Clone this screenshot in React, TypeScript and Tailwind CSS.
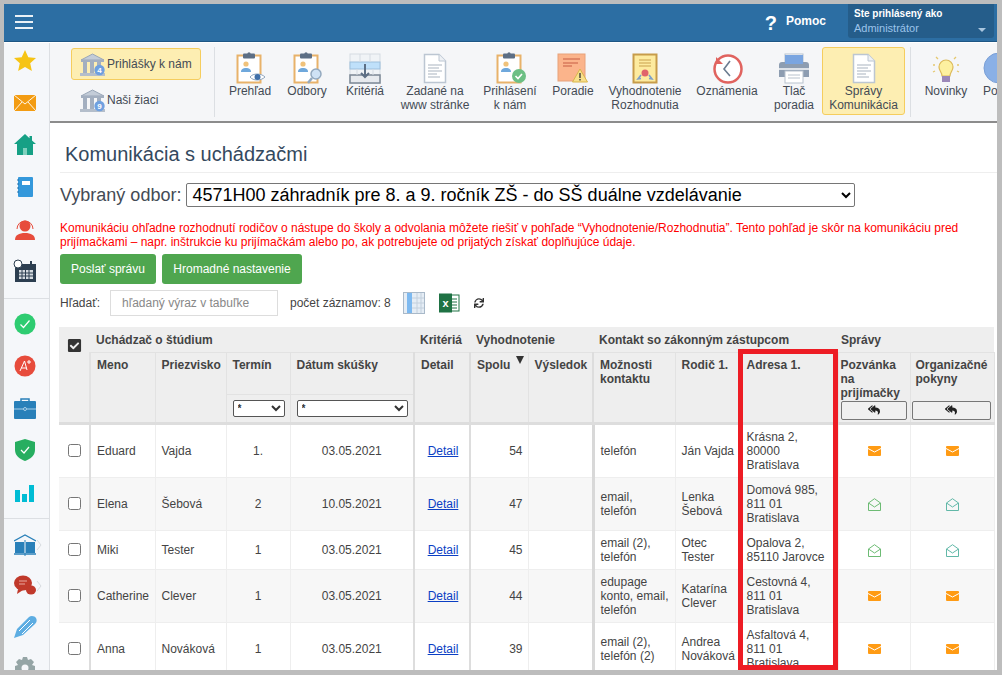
import React from "react";
import { FaReplyAll, FaSync, FaCheckSquare } from "react-icons/fa";

const Clipboard = ({ children }: { children?: React.ReactNode }) => (
  <svg width="34" height="32" viewBox="0 0 34 32">
    <rect x="4.5" y="3.5" width="23" height="27" fill="#fff" stroke="#e8b26a" strokeWidth="2" />
    <rect x="10" y="1.5" width="12" height="5" rx="1" fill="#5d6f85" />
    <circle cx="16" cy="1.8" r="1.6" fill="#5d6f85" />
    <circle cx="13" cy="12" r="2.6" fill="#f0c27a" />
    <path d="M8 20c0-3 2-4 5-4s5 1 5 4z" fill="#6fa8dc" />
    {children}
  </svg>
);

const Bank = ({ n }: { n: string }) => (
  <svg width="26" height="25" viewBox="0 0 26 25">
    <path d="M1 8 L12.5 2 L24 8 Z" fill="#c3ccd8" stroke="#9aa7b8" />
    <rect x="1" y="8" width="23" height="2" fill="#a3afc0" />
    <rect x="3" y="10" width="4" height="11" fill="#a3afc0" />
    <rect x="10" y="10" width="4" height="11" fill="#a3afc0" />
    <rect x="17" y="10" width="4" height="11" fill="#a3afc0" />
    <rect x="0" y="21" width="25" height="3" fill="#b4becb" />
    <circle cx="19.5" cy="18" r="5.2" fill="#6fa0e0" />
    <text x="19.5" y="21" fontSize="8" fontWeight="700" fill="#fff" textAnchor="middle">{n}</text>
  </svg>
);

const Doc = () => (
  <svg width="26" height="31" viewBox="0 0 26 31">
    <path d="M2.5 1.5H17L23.5 8V29.5H2.5Z" fill="#fff" stroke="#bcc6d2" strokeWidth="1.5" />
    <path d="M17 1.5V8H23.5" fill="#eef1f5" stroke="#bcc6d2" />
    <path d="M6 12H20M6 15H17M6 18H20M6 21H15M6 24H18" stroke="#a9b3bf" strokeWidth="1.2" />
  </svg>
);

const toolIcons: Record<string, React.ReactNode> = {
  eye: (
    <Clipboard>
      <path d="M17 25c3-4 11-4 15 0-4 4-12 4-15 0z" fill="#fff" stroke="#8fa5bd" />
      <circle cx="24.5" cy="25" r="3" fill="#3f6fa8" />
    </Clipboard>
  ),
  zoom: (
    <Clipboard>
      <circle cx="26" cy="22" r="5" fill="#cfe2f5" stroke="#93a9bf" strokeWidth="1.5" />
      <path d="M22 26l-4 5" stroke="#93a9bf" strokeWidth="2.5" />
    </Clipboard>
  ),
  grid: (
    <svg width="32" height="31" viewBox="0 0 32 31">
      <rect x="1" y="1" width="30" height="29" fill="#f0f3f6" stroke="#d5dbe2" />
      <rect x="1" y="9" width="30" height="7" fill="#bfe0fa" stroke="#9dbfdc" />
      <rect x="1" y="22" width="30" height="8" fill="#e7eaee" stroke="#7b8794" strokeWidth="1.5" />
      <path d="M11 1V9M21 1V9M8 16V22M24 16V22" stroke="#d5dbe2" />
      <path d="M16 11V23M12 20l4 4 4-4" stroke="#5d6f85" strokeWidth="2" fill="none" />
    </svg>
  ),
  doc: <Doc />,
  check: (
    <Clipboard>
      <circle cx="26" cy="24" r="7" fill="#6cbf84" />
      <path d="M22.5 24l2.5 2.5 4-4.5" stroke="#fff" strokeWidth="1.6" fill="none" />
    </Clipboard>
  ),
  rank: (
    <svg width="32" height="30" viewBox="0 0 32 30">
      <rect x="1" y="1" width="27" height="27" fill="#fbb48b" stroke="#e8a27a" />
      <path d="M6 6H23M6 10H21M6 13H15" stroke="#d9795c" strokeWidth="1.3" />
      <path d="M23 16l7.5 13h-15z" fill="#f8e08c" stroke="#d9b54a" />
      <path d="M23 20v5M23 26v1.5" stroke="#333" strokeWidth="1.3" />
    </svg>
  ),
  cert: (
    <svg width="26" height="31" viewBox="0 0 26 31">
      <rect x="1.5" y="1.5" width="23" height="28" fill="#fdeb9f" stroke="#c79c4a" strokeWidth="2" />
      <path d="M7 7H19M7 10H19M7 13H19" stroke="#c9a24f" strokeWidth="1.2" />
      <circle cx="13" cy="20" r="3.5" fill="#e0646b" />
      <path d="M9 22l-3 4 3-.5M17 22l3 4-3-.5" stroke="#7ea0c8" strokeWidth="1.6" fill="none" />
    </svg>
  ),
  clock: (
    <svg width="32" height="32" viewBox="0 0 32 32">
      <circle cx="17" cy="17" r="13.5" fill="#fff" stroke="#e0635f" strokeWidth="2.5" />
      <path d="M5 5v7h7z" fill="#e0635f" />
      <path d="M19 9l-6 8 6 7" stroke="#6b7c90" strokeWidth="1.6" fill="none" />
    </svg>
  ),
  print: (
    <svg width="32" height="31" viewBox="0 0 32 31">
      <rect x="7" y="1" width="18" height="12" fill="#fff" stroke="#b8c2cd" />
      <path d="M1 12a3 3 0 0 1 3-3h24a3 3 0 0 1 3 3v12H1Z" fill="#8d9db1" />
      <path d="M7 2H25V11H7Z" fill="#7aa5e0" />
      <rect x="7" y="18" width="18" height="12" fill="#fff" stroke="#b8c2cd" />
      <path d="M10 22H22M10 25H22" stroke="#b8c2cd" />
      <rect x="1" y="15" width="30" height="2" fill="#fff" opacity=".7" />
    </svg>
  ),
  bulb: (
    <svg width="32" height="32" viewBox="0 0 32 32">
      <path d="M9 15a7 7 0 1 1 14 0c0 4-3 5-3 9h-8c0-4-3-5-3-9z" fill="#fdf0a0" stroke="#dcb95a" strokeWidth="1.2" />
      <rect x="12" y="24" width="8" height="6" fill="#9b87b8" />
      <path d="M3 13H5M27 13H29M6 5L8 7M26 5L24 7M3 20l2-1M29 20l-2-1" stroke="#e5c86e" strokeWidth="1.3" />
    </svg>
  ),
  circle: (
    <svg width="32" height="32" viewBox="0 0 32 32" className="shrink-0">
      <circle cx="16" cy="16" r="15" fill="#8ab0e6" stroke="#7a9fd6" />
    </svg>
  ),
};

const tools = [
  { w: "w-[56px]", icon: "eye", label: ["Prehľad"] },
  { w: "w-[58px]", icon: "zoom", label: ["Odbory"] },
  { w: "w-[58px]", icon: "grid", label: ["Kritériá"] },
  { w: "w-[82px]", icon: "doc", label: ["Zadané na", "www stránke"] },
  { w: "w-[68px]", icon: "check", label: ["Prihlásení", "k nám"] },
  { w: "w-[58px]", icon: "rank", label: ["Poradie"] },
  { w: "w-[86px]", icon: "cert", label: ["Vyhodnotenie", "Rozhodnutia"] },
  { w: "w-[78px]", icon: "clock", label: ["Oznámenia"] },
  { w: "w-[56px]", icon: "print", label: ["Tlač", "poradia"] },
];

const Tool = ({ w, icon, label, active }: { w: string; icon: string; label: string[]; active?: boolean }) => (
  <div className={`${w} h-[68px] shrink-0 self-start mt-[4px] flex flex-col items-center rounded-[3px] ${active ? "bg-[#fdeeb2] border border-[#f5cd5e] pt-[4px]" : "pt-[5px]"}`}>
    <div className="h-[32px] flex items-center justify-center">{toolIcons[icon]}</div>
    <div className="text-center whitespace-nowrap leading-[14px] text-[#444b55]">
      {label.map((l) => (
        <div key={l}>{l}</div>
      ))}
    </div>
  </div>
);

const side1: React.ReactNode[] = [
  <svg width="24" height="24" viewBox="0 0 24 24"><path d="M12 1l3.3 7.3 7.7.8-5.8 5.2 1.7 7.7L12 18l-6.9 4 1.7-7.7L1 9.1l7.7-.8z" fill="#f6c416" /></svg>,
  <svg width="24" height="18" viewBox="0 0 24 18"><rect x="1" y="1" width="22" height="16" fill="#f39c12" /><path d="M1 1l11 9 11-9M1 17l8-9M23 17l-8-9" stroke="#fff" fill="none" strokeWidth=".9" /></svg>,
  <svg width="24" height="24" viewBox="0 0 24 24"><path d="M12 1L1 11h3v11h16V11h3l-4-3.6V3h-2.5v2.2z" fill="#16a085" /><rect x="10" y="15" width="4" height="7" fill="#7fd0bd" /></svg>,
  <svg width="18" height="22" viewBox="0 0 18 22"><rect x="2" y="1" width="15" height="20" rx="1" fill="#3498db" /><rect x="6" y="5" width="8" height="4" fill="#fff" /><path d="M1 4h2M1 8h2M1 12h2M1 16h2" stroke="#1f6fa8" /></svg>,
  <svg width="22" height="24" viewBox="0 0 22 24"><path d="M3 12a8 8 0 1 1 16 0" fill="none" stroke="#e74c3c" /><circle cx="11" cy="9" r="5.5" fill="#e74c3c" /><path d="M1 23c0-5 4-7 10-7s10 2 10 7z" fill="#e74c3c" /></svg>,
  <svg width="24" height="24" viewBox="0 0 24 24"><rect x="2" y="5" width="21" height="18" fill="#2c3e50" /><rect x="6" y="11" width="14" height="9" fill="#d5dbe0" /><path d="M6 14h14M6 17h14M9 11v9M12.5 11v9M16 11v9" stroke="#2c3e50" /><circle cx="5" cy="5" r="4" fill="#fff" stroke="#2c3e50" /><rect x="17" y="2" width="2" height="5" fill="#2c3e50" /></svg>,
];
const side2: React.ReactNode[] = [
  <svg width="22" height="22" viewBox="0 0 22 22"><circle cx="11" cy="11" r="10.5" fill="#2ecc71" /><path d="M6.5 11.5l3 3 6-7" stroke="#fff" strokeWidth="1.2" fill="none" /></svg>,
  <svg width="22" height="22" viewBox="0 0 22 22"><circle cx="11" cy="11" r="10.5" fill="#e74c3c" /><path d="M6 16L10.5 6l2.5 9M7.5 13h5M15 5v4M13 7h4" stroke="#fff" strokeWidth="1" fill="none" /></svg>,
  <svg width="24" height="24" viewBox="0 0 24 24"><path d="M8 6V3h8v3" fill="none" stroke="#2980b9" strokeWidth="1.5" /><rect x="1" y="5" width="22" height="18" rx="1" fill="#2980b9" /><path d="M1 13h22" stroke="#a9cfe8" /><circle cx="12" cy="13" r="1.5" fill="#2980b9" stroke="#a9cfe8" /></svg>,
  <svg width="22" height="24" viewBox="0 0 22 24"><path d="M11 1l10 3v8c0 6-5 9-10 11C6 21 1 18 1 12V4z" fill="#27ae60" /><path d="M7 12l3 3 5-6" stroke="#fff" fill="none" strokeWidth="1.2" /></svg>,
  <svg width="20" height="20" viewBox="0 0 20 20"><rect x="0" y="8" width="5" height="12" fill="#00bcd4" /><rect x="7" y="12" width="5" height="8" fill="#00bcd4" /><rect x="14" y="3" width="5" height="17" fill="#00bcd4" /></svg>,
];
const Chev = () => (
  <svg width="6" height="12" viewBox="0 0 6 12" className="-mr-[6px]"><path d="M1 1l4 5-4 5" fill="none" stroke="#d8dce0" /></svg>
);
const side3: React.ReactNode[] = [
  <div className="flex items-center"><svg width="22" height="22" viewBox="0 0 22 22"><path d="M0 7L11 1l11 6" fill="none" stroke="#2980b9" strokeWidth="1.2" /><path d="M1 8h9v11H1zM12 8h9v11h-9z" fill="#2980b9" /><path d="M11 6v16" stroke="#2980b9" /><path d="M0 20h22" stroke="#2980b9" strokeWidth="1.5" /></svg><Chev /></div>,
  <div className="flex items-center"><svg width="22" height="22" viewBox="0 0 22 22"><ellipse cx="9" cy="8" rx="9" ry="7.5" fill="#c0392b" /><path d="M4 14l-1 5 6-4z" fill="#c0392b" /><ellipse cx="17" cy="15" rx="5" ry="4.5" fill="#c0392b" /><path d="M5 6h8M5 9h6" stroke="#e8a8a0" /></svg><Chev /></div>,
  <svg width="24" height="24" viewBox="0 0 24 24"><path d="M1 23l3-9L16 2c2-2 6-1 7 1s1 4-1 6L10 20z" fill="#5dade2" /><path d="M6 16L17 5M9 19L20 8" stroke="#fff" strokeWidth="1" /></svg>,
  <svg width="24" height="24" viewBox="0 0 24 24"><path d="M10 1h4l1 3 3-1 3 3-2 3 3 1v4l-3 1 2 3-3 3-3-2-1 3h-4l-1-3-3 2-3-3 2-3-3-1v-4l3-1-2-3 3-3 3 1z" fill="#95a5a6" /><circle cx="12" cy="12" r="3.5" fill="#f5f7fa" /></svg>,
];

const MailSolid = () => (
  <svg width="13" height="10" viewBox="0 0 13 10" className="inline-block">
    <rect x="0" y="0" width="13" height="10" rx="1" fill="#ff9b14" />
    <path d="M0 2.5l6.5 3.5 6.5-3.5" stroke="#fff" strokeWidth="1" fill="none" />
  </svg>
);
const MailOpen = ({ c }: { c: string }) => (
  <svg width="13" height="13" viewBox="0 0 13 13" className="inline-block">
    <path d="M.5 5L6.5.7 12.5 5v7.5H.5z" fill="none" stroke={c} />
    <path d="M.5 5l6 4 6-4" fill="none" stroke={c} />
  </svg>
);

const rows = [
  { m: "Eduard", p: "Vajda", t: "1.", d: "03.05.2021", s: "54", k: ["telefón"], r: ["Ján Vajda"], a: ["Krásna 2,", "80000", "Bratislava"], open: false, h: "h-[53px]" },
  { m: "Elena", p: "Šebová", t: "2", d: "10.05.2021", s: "47", k: ["email,", "telefón"], r: ["Lenka", "Šebová"], a: ["Domová 985,", "811 01", "Bratislava"], open: true, h: "h-[53px]" },
  { m: "Miki", p: "Tester", t: "1", d: "03.05.2021", s: "45", k: ["email (2),", "telefón"], r: ["Otec", "Tester"], a: ["Opalova 2,", "85110 Jarovce"], open: true, h: "h-[39px]" },
  { m: "Catherine", p: "Clever", t: "1", d: "03.05.2021", s: "44", k: ["edupage", "konto, email,", "telefón"], r: ["Katarína", "Clever"], a: ["Cestovná 4,", "811 01", "Bratislava"], open: false, h: "h-[53px]" },
  { m: "Anna", p: "Nováková", t: "1", d: "03.05.2021", s: "39", k: ["email (2),", "telefón (2)"], r: ["Andrea", "Nováková"], a: ["Asfaltová 4,", "811 01", "Bratislava"], open: false, h: "h-[53px]" },
];

const th = "align-top text-left font-bold text-[#444] px-[6px] pt-[5px] border border-[#e2e2e2] leading-[14px]";
const gr = "text-left font-bold text-[#444] pt-[1px]";
const td = "px-[6px] py-[5px] align-middle border border-[#eeeeee] leading-[14px] text-[#444]";
const thick = "border-b-[3px] border-b-[#dddddd]";

const Lines = ({ l }: { l: string[] }) => (
  <>
    {l.map((x, i) => (
      <div key={i} className="whitespace-nowrap">{x}</div>
    ))}
  </>
);

const ReplyBtn = () => (
  <button className="w-full h-[19px] border border-[#777] rounded-[2px] bg-[#f0f0f0] flex items-center justify-center">
    <FaReplyAll size={12} color="#222" />
  </button>
);

export default function App() {
  return (
    <div className="h-[675px] w-[1002px] bg-[#bdbdbd] pt-[4px] pl-[4px] pr-[5px] pb-[5px] overflow-hidden [font-family:'Liberation_Sans',Arial,sans-serif] text-[12px]">
      <div className="relative h-full flex flex-col overflow-hidden bg-white">
        <header className="h-[38px] shrink-0 bg-[#2c6ea3] border-b border-[#1d5684] flex items-center text-white">
          <div className="w-[18px] ml-[11px] -mt-[1px] flex flex-col gap-[4px]">
            <span className="h-[2px] bg-white/90" />
            <span className="h-[2px] bg-white/90" />
            <span className="h-[2px] bg-white/90" />
          </div>
          <div className="ml-auto flex items-center h-full">
            <span className="text-[20px] font-bold leading-none mr-[9px]">?</span>
            <span className="font-bold mr-[22px] -mt-[3px]">Pomoc</span>
            <div className="w-[146px] h-[34px] self-start bg-[#255d8a] rounded-b-[3px] pl-[6px] pr-[8px] pt-[3px] mr-[3px]">
              <div className="font-bold text-[10px] leading-[14px]">Ste prihlásený ako</div>
              <div className="flex items-center justify-between text-[#9cc4ea] text-[11px] leading-[14px]">
                <span>Administrátor</span>
                <span className="w-0 h-0 border-l-[4px] border-r-[4px] border-t-[4px] border-l-transparent border-r-transparent border-t-[#a9c6df] mt-[3px]" />
              </div>
            </div>
          </div>
        </header>
        <div className="flex-1 flex min-h-0 mt-[1px]">
          <aside className="w-[46px] shrink-0 bg-[#f5f7fa] border-r border-[#dcdfe3] overflow-hidden">
            <div className="flex flex-col items-center gap-[14px] pt-[4px] pb-[13px] pr-[4px] border-b border-[#dcdfe3]">
              {side1.map((s, i) => <div key={i} className="h-[28px] flex items-center justify-center">{s}</div>)}
            </div>
            <div className="flex flex-col items-center gap-[14px] pt-[11px] pb-[12px] pr-[4px] border-b border-[#dcdfe3]">
              {side2.map((s, i) => <div key={i} className="h-[28px] flex items-center justify-center">{s}</div>)}
            </div>
            <div className="flex flex-col items-center gap-[13px] pt-[12px] pr-[4px]">
              {side3.map((s, i) => <div key={i} className="h-[28px] flex items-center justify-center">{s}</div>)}
            </div>
          </aside>
          <main className="flex-1 min-w-0 flex flex-col overflow-hidden">
            <div className="h-[80px] shrink-0 bg-[#f5f6f8] border-b-2 border-[#8c8c8c] flex items-center overflow-hidden text-[#444b55]">
              <div className="w-[164px] shrink-0 pl-[21px] pr-[13px]">
                <div className="h-[32px] w-[130px] rounded-[3px] bg-[#fdeeb2] border border-[#f5cd5e] flex items-center pl-[8px] gap-[1px]">
                  <Bank n="4" />
                  <span>Prihlášky k nám</span>
                </div>
                <div className="h-[32px] w-[130px] mt-[4px] flex items-center pl-[9px] gap-[1px]">
                  <Bank n="9" />
                  <span>Naši žiaci</span>
                </div>
              </div>
              <div className="w-px h-[70px] bg-[#dcdfe3] shrink-0" />
              <div className="w-[7px] shrink-0" />
              {tools.map((t) => (
                <Tool key={t.icon} {...t} />
              ))}
              <Tool w="w-[83px]" icon="doc" label={["Správy", "Komunikácia"]} active />
              <div className="w-px h-[70px] bg-[#dcdfe3] shrink-0 ml-[5px] mr-[9px]" />
              <Tool w="w-[52px]" icon="bulb" label={["Novinky"]} />
              <div className="h-[68px] self-start mt-[4px] pt-[5px] ml-[11px] shrink-0 flex flex-col items-start">
                <div className="h-[32px]">{toolIcons.circle}</div>
                <div className="leading-[14px] whitespace-nowrap">Pomoc</div>
              </div>
            </div>
            <div className="flex-1 min-h-0 overflow-hidden pl-[10px] bg-white">
              <h1 className="text-[20px] leading-[24px] text-[#34495e] pl-[5px] mt-[19px]">Komunikácia s uchádzačmi</h1>
              <div className="h-px bg-[#eeeeee] mt-[6px]" />
              <div className="flex items-center mt-[10px] h-[24px] text-[18px] text-[#444b55]">
                <span className="whitespace-nowrap">Vybraný odbor:</span>
                <select className="ml-[5px] w-[669px] h-[24px] border border-[#767676] rounded-[2px] bg-white text-[18px] text-black pl-[1px]">
                  <option>4571H00 záhradník pre 8. a 9. ročník ZŠ - do SŠ duálne vzdelávanie</option>
                </select>
              </div>
              <p className="mt-[14px] text-[#ff0000] leading-[14px] w-[920px]">
                Komunikáciu ohľadne rozhodnutí rodičov o nástupe do školy a odvolania môžete riešiť v pohľade “Vyhodnotenie/Rozhodnutia”. Tento pohľad je skôr na komunikáciu pred prijímačkami – napr. inštrukcie ku prijímačkám alebo po, ak potrebujete od prijatých získať doplňujúce údaje.
              </p>
              <div className="flex gap-[6px] mt-[5px]">
                <button className="w-[96px] h-[30px] bg-[#4fa64f] rounded-[3px] text-white">Poslať správu</button>
                <button className="w-[140px] h-[30px] bg-[#4fa64f] rounded-[3px] text-white">Hromadné nastavenie</button>
              </div>
              <div className="flex items-center h-[26px] mt-[6px] text-[#444]">
                <span className="w-[50px]">Hľadať:</span>
                <input placeholder="hľadaný výraz v tabuľke" className="w-[168px] h-[26px] border border-[#dddddd] pl-[11px] placeholder:text-[#888] outline-none" />
                <span className="ml-[12px]">počet záznamov: 8</span>
                <svg width="22" height="22" viewBox="0 0 22 22" className="ml-[12px]">
                  <rect x="0.5" y="0.5" width="21" height="21" fill="#e5edf5" stroke="#a9b9c9" />
                  <rect x="4" y="1" width="5" height="20" fill="#7db9f0" />
                  <path d="M14 1V21M18 1V21M9 6H21M9 11H21M9 16H21" stroke="#c3d0dd" />
                </svg>
                <svg width="22" height="22" viewBox="0 0 22 22" className="ml-[13px]">
                  <rect x="10" y="3" width="11" height="16" fill="#fff" stroke="#1f7244" />
                  <path d="M13 7h6M13 10h6M13 13h6M13 16h6" stroke="#1f7244" />
                  <rect x="1" y="1.5" width="13" height="19" fill="#1f7244" />
                  <text x="7.5" y="15" fontSize="11" fontWeight="700" fill="#fff" textAnchor="middle">x</text>
                </svg>
                <FaSync size={10} color="#333" className="ml-[14px]" />
              </div>
              <table className="table-fixed border-collapse w-[935px] ml-[-1px] mt-[11px] text-[12px]">
                <colgroup>
                  {[31, 65, 71, 64, 124, 56, 58, 65, 82, 65, 98, 72, 84].map((w, i) => (
                    <col key={i} style={{ width: w }} />
                  ))}
                </colgroup>
                <thead className="bg-[#eeeeee]">
                  <tr className="h-[25px]">
                    <th rowSpan={3} className={`align-top pt-[11px] ${thick}`}>
                      <FaCheckSquare size={15} color="#333" className="mx-auto" />
                    </th>
                    <th colSpan={4} className={`${gr} px-[6px]`}>Uchádzač o štúdium</th>
                    <th className={`${gr} px-[6px]`}>Kritériá</th>
                    <th colSpan={2} className={`${gr} px-[6px]`}>Vyhodnotenie</th>
                    <th colSpan={3} className={`${gr} px-[6px]`}>Kontakt so zákonným zástupcom</th>
                    <th colSpan={2} className={`${gr} px-[3px]`}>Správy</th>
                  </tr>
                  <tr className="h-[42px]">
                    <th rowSpan={2} className={`${th} ${thick} border-l-[2px]`}>Meno</th>
                    <th rowSpan={2} className={`${th} ${thick}`}>Priezvisko</th>
                    <th className={th}>Termín</th>
                    <th className={th}>Dátum skúšky</th>
                    <th rowSpan={2} className={`${th} ${thick} border-l-[2px] border-l-[#dddddd] border-r-[2px] border-r-[#dddddd]`}>Detail</th>
                    <th rowSpan={2} className={`${th} ${thick}`}>
                      <div className="flex justify-between">
                        <span>Spolu</span>
                        <span className="w-0 h-0 -mt-[2px] -mr-[2px] border-l-[4px] border-r-[4px] border-t-[8px] border-l-transparent border-r-transparent border-t-[#333]" />
                      </div>
                    </th>
                    <th rowSpan={2} className={`${th} ${thick} border-r-[2px] border-r-[#dddddd]`}>Výsledok</th>
                    <th rowSpan={2} className={`${th} ${thick}`}>Možnosti<br />kontaktu</th>
                    <th rowSpan={2} className={`${th} ${thick}`}>Rodič 1.</th>
                    <th rowSpan={2} className={`${th} ${thick}`}>Adresa 1.</th>
                    <th rowSpan={2} className={`align-top text-left font-bold text-[#444] pl-[2px] pr-[3px] border border-[#e2e2e2] ${thick}`}>
                      <div className="h-[67px] flex flex-col justify-between pt-[5px] leading-[14px]">
                        <div>Pozvánka<br />na<br />prijímačky</div>
                        <ReplyBtn />
                      </div>
                    </th>
                    <th rowSpan={2} className={`align-top text-left font-bold text-[#444] pl-[1px] pr-[3px] border border-[#e2e2e2] ${thick}`}>
                      <div className="h-[67px] flex flex-col justify-between pt-[5px] leading-[14px]">
                        <div className="pl-[4px]">Organizačné<br />pokyny</div>
                        <ReplyBtn />
                      </div>
                    </th>
                  </tr>
                  <tr className="h-[29px]">
                    <th className={`pl-[6px] pr-[5px] align-middle border border-[#e2e2e2] ${thick}`}>
                      <select className="w-full h-[17px] border border-[#555] rounded-[2px] bg-white text-[10px] text-[#333] block"><option>*</option></select>
                    </th>
                    <th className={`pl-[6px] pr-[5px] align-middle border border-[#e2e2e2] ${thick}`}>
                      <select className="w-full h-[17px] border border-[#555] rounded-[2px] bg-white text-[10px] text-[#333] block"><option>*</option></select>
                    </th>
                  </tr>
                </thead>
                <tbody>
                  {rows.map((r, i) => (
                    <tr key={i} className={`${r.h} ${i % 2 ? "bg-[#f7f7f7]" : "bg-white"}`}>
                      <td className={`${td} border-l-0 border-r-[2px] border-r-[#dddddd]`}><input type="checkbox" className="block w-[13px] h-[13px] ml-[3px]" /></td>
                      <td className={td}>{r.m}</td>
                      <td className={td}>{r.p}</td>
                      <td className={`${td} text-center`}>{r.t}</td>
                      <td className={`${td} text-center`}>{r.d}</td>
                      <td className={`${td} text-center pl-[8px] border-l-[2px] border-l-[#dddddd] border-r-[2px] border-r-[#dddddd]`}>
                        <a href="#" className="text-[#0b3fc4] underline">Detail</a>
                      </td>
                      <td className={`${td} text-right pr-[5px]`}>{r.s}</td>
                      <td className={`${td} border-r-[3px] border-r-[#d8d8d8]`} />
                      <td className={td}><Lines l={r.k} /></td>
                      <td className={td}><Lines l={r.r} /></td>
                      <td className={td}><Lines l={r.a} /></td>
                      <td className={`${td} text-center`}>{r.open ? <MailOpen c="#6dbb74" /> : <MailSolid />}</td>
                      <td className={`${td} text-center`}>{r.open ? <MailOpen c="#62b8a8" /> : <MailSolid />}</td>
                    </tr>
                  ))}
                </tbody>
              </table>
            </div>
          </main>
        </div>
        <div className="absolute left-[734px] top-[345px] w-[100px] h-[321px] border-[5px] border-[#ed1c24] pointer-events-none" />
      </div>
    </div>
  );
}
